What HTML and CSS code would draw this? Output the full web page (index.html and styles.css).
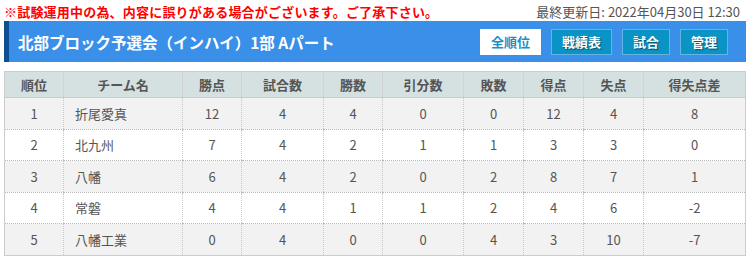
FILE: index.html
```html
<!DOCTYPE html>
<html lang="ja">
<head>
<meta charset="utf-8">
<link rel="stylesheet" href="styles.css">
</head>
<body>
<div class="topline">
  <span class="notice">※試験運用中の為、内容に誤りがある場合がございます。ご了承下さい。</span>
  <span class="updated">最終更新日: 2022年04月30日 12:30</span>
</div>
<div class="bar">
  <h1 class="title">北部ブロック予選会（インハイ）1部 Aパート</h1>
  <nav class="tabs">
    <a class="tab active">全順位</a>
    <a class="tab">戦績表</a>
    <a class="tab">試合</a>
    <a class="tab">管理</a>
  </nav>
</div>
<table class="standings">
  <colgroup>
    <col class="c59"><col class="c119"><col class="c59"><col class="c82"><col class="c59"><col class="c81"><col class="c60"><col class="c60"><col class="c60"><col class="c102">
  </colgroup>
  <thead>
    <tr><th>順位</th><th>チーム名</th><th>勝点</th><th>試合数</th><th>勝数</th><th>引分数</th><th>敗数</th><th>得点</th><th>失点</th><th>得失点差</th></tr>
  </thead>
  <tbody>
    <tr><td>1</td><td class="team">折尾愛真</td><td>12</td><td>4</td><td>4</td><td>0</td><td>0</td><td>12</td><td>4</td><td>8</td></tr>
    <tr><td>2</td><td class="team">北九州</td><td>7</td><td>4</td><td>2</td><td>1</td><td>1</td><td>3</td><td>3</td><td>0</td></tr>
    <tr><td>3</td><td class="team">八幡</td><td>6</td><td>4</td><td>2</td><td>0</td><td>2</td><td>8</td><td>7</td><td>1</td></tr>
    <tr><td>4</td><td class="team">常磐</td><td>4</td><td>4</td><td>1</td><td>1</td><td>2</td><td>4</td><td>6</td><td>-2</td></tr>
    <tr><td>5</td><td class="team">八幡工業</td><td>0</td><td>4</td><td>0</td><td>0</td><td>4</td><td>3</td><td>10</td><td>-7</td></tr>
  </tbody>
</table>
</body>
</html>
```

FILE: styles.css
```css
html, body {
  margin: 0;
  padding: 0;
  background: #fff;
}
body {
  padding: 2px 4px 0 4px;
  font-family: "Noto Sans CJK JP", "Noto Sans", sans-serif;
  color: #555;
}
.topline {
  display: flex;
  justify-content: space-between;
  align-items: center;
  height: 19px;
  font-size: 13px;
  line-height: 17px;
}
.notice {
  color: #f00;
  font-weight: bold;
  letter-spacing: 0.2px;
}
.updated {
  color: #555;
  padding-right: 6px;
}
.bar {
  display: flex;
  align-items: center;
  justify-content: space-between;
  height: 41px;
  background: #3a8fe8;
  border-left: 5px solid #0e4f94;
  padding: 0 18px 0 9px;
}
.title {
  margin: 0;
  font-size: 15.5px;
  font-weight: bold;
  color: #fff;
  line-height: 20px;
}
.tabs {
  display: flex;
  gap: 10px;
}
.tab {
  display: block;
  height: 24px;
  line-height: 24px;
  padding: 0 10px;
  font-size: 13px;
  font-weight: bold;
  color: #fff;
  background: #0a93c5;
  border: 1px solid #63b3e3;
  text-shadow: 1px 1px 1px rgba(0,0,0,0.45);
}
.tab.active {
  background: #fff;
  color: #1a90c8;
  border-color: #fff;
  text-shadow: none;
}
.standings {
  margin-top: 9px;
  width: 742px;
  border-collapse: collapse;
  table-layout: fixed;
  font-size: 13px;
  border: 1px solid #ccc;
}
.c59 { width: 59px; }
.c60 { width: 60px; }
.c81 { width: 81px; }
.c82 { width: 82px; }
.c102 { width: 102px; }
.c119 { width: 119px; }
.standings th {
  background: #d5e1e1;
  color: #555;
  font-weight: bold;
  height: 25px;
  padding: 0;
  border-left: 1px dotted #c8c8c8;
  border-bottom: 1px solid #ccc;
  text-align: center;
}
.standings td {
  height: 30.5px;
  padding: 0;
  text-align: center;
  color: #555;
  border-left: 1px dotted #c8c8c8;
  border-bottom: 1px dotted #b8b8b8;
}
.standings th:first-child,
.standings td:first-child {
  border-left: 1px solid #ccc;
}
.standings td.team {
  text-align: left;
  padding-left: 11px;
}
.standings tbody tr:nth-child(odd) td {
  background: #f2f2f2;
}
.standings tbody tr:nth-child(even) td {
  background: #fff;
}
```
